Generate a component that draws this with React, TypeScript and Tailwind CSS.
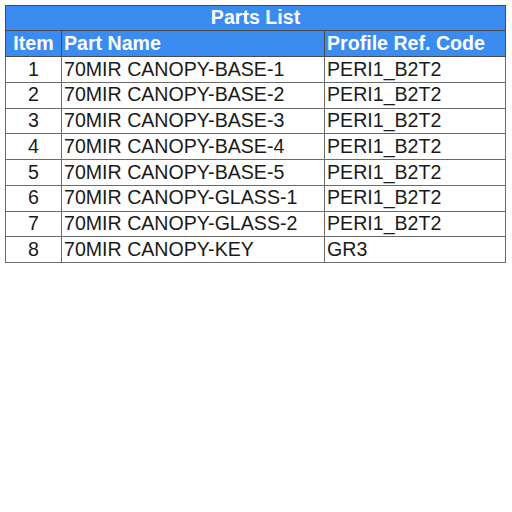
const rows = [
  ["1", "70MIR CANOPY-BASE-1", "PERI1_B2T2"],
  ["2", "70MIR CANOPY-BASE-2", "PERI1_B2T2"],
  ["3", "70MIR CANOPY-BASE-3", "PERI1_B2T2"],
  ["4", "70MIR CANOPY-BASE-4", "PERI1_B2T2"],
  ["5", "70MIR CANOPY-BASE-5", "PERI1_B2T2"],
  ["6", "70MIR CANOPY-GLASS-1", "PERI1_B2T2"],
  ["7", "70MIR CANOPY-GLASS-2", "PERI1_B2T2"],
  ["8", "70MIR CANOPY-KEY", "GR3"],
];

export default function App() {
  return (
    <div className="w-[512px] h-[512px] bg-white pt-[5px] pl-[5px] font-['Liberation_Sans',Arial,sans-serif]">
      <table className="w-[500px] border-collapse table-fixed text-[19.6px] leading-none">
        <colgroup>
          <col className="w-[56px]" />
          <col className="w-[263px]" />
          <col className="w-[181px]" />
        </colgroup>
        <thead>
          <tr className="h-[25px] bg-[#3b8cf0] text-white">
            <th colSpan={3} className="border border-[#4a4a4a] font-bold text-center">
              Parts List
            </th>
          </tr>
          <tr className="h-[26px] bg-[#3b8cf0] text-white">
            <th className="border border-[#4a4a4a] font-bold text-center">Item</th>
            <th className="border border-[#4a4a4a] font-bold text-left pl-[2px]">Part Name</th>
            <th className="border border-[#4a4a4a] font-bold text-left pl-[2px]">Profile Ref. Code</th>
          </tr>
        </thead>
        <tbody className="text-[#1a1a1a]">
          {rows.map(([n, name, code]) => (
            <tr key={n} className="h-[25.75px]">
              <td className="border border-[#6b6b6b] text-center">{n}</td>
              <td className="border border-[#6b6b6b] pl-[2px] whitespace-nowrap">{name}</td>
              <td className="border border-[#6b6b6b] pl-[2px] whitespace-nowrap">{code}</td>
            </tr>
          ))}
        </tbody>
      </table>
    </div>
  );
}
